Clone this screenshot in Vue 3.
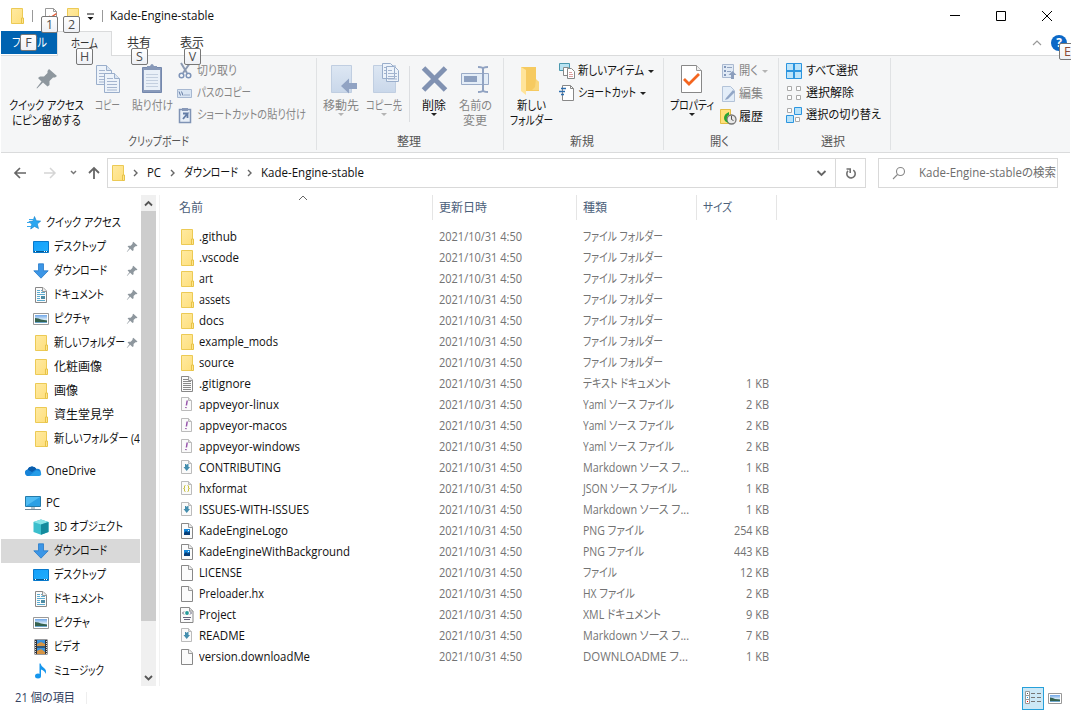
<template>
  <div class="window">
    <svg class="defs" aria-hidden="true">
      <defs>
        <linearGradient id="g-folder" x1="0" y1="0" x2="1" y2="1">
          <stop offset="0" stop-color="#ffeaa2" />
          <stop offset="1" stop-color="#fedf7c" />
        </linearGradient>
        <linearGradient id="g-pale" x1="0" y1="0" x2="0" y2="1">
          <stop offset="0" stop-color="#dde7f3" />
          <stop offset="1" stop-color="#c9d7ea" />
        </linearGradient>
        <linearGradient id="g-blue" x1="0" y1="0" x2="1" y2="1">
          <stop offset="0" stop-color="#14a0fb" />
          <stop offset="1" stop-color="#22aefc" />
        </linearGradient>
        <linearGradient id="g-sky" x1="0" y1="0" x2="0" y2="1">
          <stop offset="0" stop-color="#6fa6e8" />
          <stop offset="0.55" stop-color="#d9ebf8" />
          <stop offset="1" stop-color="#5a9ac4" />
        </linearGradient>
      </defs>
    </svg>

    <header class="titlebar">
      <svg class="i16" viewBox="0 0 16 16" v-html="icons.folder"></svg>
      <i class="vline first"></i>
      <div class="tipped">
        <svg class="i16" viewBox="0 0 16 16" v-html="icons.check"></svg>
        <kbd class="tip">1</kbd>
      </div>
      <div class="tipped second">
        <svg class="i16" viewBox="0 0 16 16" v-html="icons.folder"></svg>
        <kbd class="tip">2</kbd>
      </div>
      <svg class="more" width="9" height="8" viewBox="0 0 9 8"><path d="M1 .5h7v1H1zM1.500 4h6L4.500 7z" fill="#111" /></svg>
      <i class="vline"></i>
      <span class="title" v-fit="104">Kade-Engine-stable</span>
      <div class="controls">
        <svg width="12" height="12" viewBox="0 0 12 12"><path d="M1 5.500h10" /></svg>
        <svg width="12" height="12" viewBox="0 0 12 12"><path d="M1.500 1.500h9v9h-9z" /></svg>
        <svg width="12" height="12" viewBox="0 0 12 12"><path d="M1 1l10 10M11 1L1 11" /></svg>
      </div>
    </header>

    <nav class="tabs">
      <div v-for="t in tabs" :key="t.key" class="tab" :class="t.cls">
        <span v-fit="t.w">{{ t.label }}</span>
        <kbd class="tip">{{ t.key }}</kbd>
      </div>
      <div class="help">
        <svg width="10" height="6" viewBox="0 0 10 6"><path d="M1 5l4-4 4 4" fill="none" stroke="#999" stroke-width="1.200" /></svg>
        <div class="tipped">
          <b class="question">?</b>
          <kbd class="tip">E</kbd>
        </div>
      </div>
    </nav>

    <section class="ribbon">
      <div v-for="g in groups" :key="g.cls" class="group" :class="g.cls">
        <div class="tools">
          <template v-for="(b, i) in g.big" :key="i">
            <i v-if="b.sep" class="tool-sep"></i>
            <div v-else class="big" :class="[b.cls, { off: b.off }]">
              <svg width="36" height="36" viewBox="0 0 36 36" v-html="icons[b.icon]"></svg>
              <span v-for="l in b.lines" :key="l[0]" class="line"><span v-fit="l[1]">{{ l[0] }}</span></span>
              <i v-if="b.drop" class="drop"></i>
            </div>
          </template>
          <div v-if="g.small" class="smalls">
            <div v-for="s in g.small" :key="s.label" class="small" :class="{ off: s.off }">
              <svg class="i16" viewBox="0 0 16 16" v-html="icons[s.icon]"></svg>
              <span v-fit="s.w">{{ s.label }}</span>
              <i v-if="s.drop" class="drop"></i>
            </div>
          </div>
        </div>
        <div class="caption"><span v-fit="g.w">{{ g.caption }}</span></div>
      </div>
    </section>

    <div class="address-row">
      <div class="arrows">
        <svg width="84" height="16" viewBox="0 0 84 16" fill="none">
          <path d="M12 8H1M6 3L1 8l5 5" stroke="#666" stroke-width="1.700" />
          <path d="M30 8h11M36 3l5 5-5 5" stroke="#d5d5d5" stroke-width="1.500" />
          <path d="M57 6l2.500 2.500L62 6" stroke="#777" stroke-width="1.500" />
          <path d="M80 14V3M75 8l5-5 5 5" stroke="#666" stroke-width="1.800" />
        </svg>
      </div>
      <div class="address">
        <svg class="i16" viewBox="0 0 16 16" v-html="icons.folder"></svg>
        <template v-for="c in crumbs" :key="c[0]">
          <svg class="chev" width="5" height="8" viewBox="0 0 5 8"><path d="M1 1l3 3-3 3" fill="none" stroke="#666" stroke-width="1.400" /></svg>
          <span v-fit="c[1]">{{ c[0] }}</span>
        </template>
        <div class="address-end">
          <svg width="11" height="8" viewBox="0 0 11 8"><path d="M1.500 2l4 4 4-4" fill="none" stroke="#666" stroke-width="1.800" /></svg>
        </div>
        <div class="refresh">
          <svg width="12" height="14" viewBox="0 0 12 14" fill="none" stroke="#707070" stroke-width="1.600"><path d="M8.300 4.200A4.200 4.200 0 1 1 3 4.800M1.500 3h3.700v4" /></svg>
        </div>
      </div>
      <div class="search">
        <svg width="14" height="14" viewBox="0 0 14 14" fill="none" stroke="#888" stroke-width="1.100"><circle cx="8.500" cy="5.500" r="4" /><path d="M5.500 8.500L1 13" /></svg>
        <span v-fit="137">Kade-Engine-stableの検索</span>
      </div>
    </div>

    <main class="content">
      <aside class="tree">
        <div v-for="(n, i) in tree" :key="i" class="node" :class="{ root: n.root, gap: n.gap, selected: n.selected }">
          <svg class="i16" viewBox="0 0 16 16" v-html="icons[n.icon]"></svg>
          <span v-fit="n.w">{{ n.label }}</span>
          <svg v-if="n.pin" class="pin" width="12" height="12" viewBox="7 7 23 22" v-html="icons.pin"></svg>
        </div>
      </aside>
      <div class="scroll">
        <svg width="15" height="16" viewBox="0 0 15 16"><path d="M4 10.500l3.500-3.500 3.500 3.500" /></svg>
        <div class="thumb"></div>
        <svg width="15" height="16" viewBox="0 0 15 16"><path d="M4 6l3.500 3.500L11 6" /></svg>
      </div>
      <div class="files">
        <div class="row head">
          <div class="name"><span v-fit="24">名前</span>
            <svg class="sort" width="10" height="6" viewBox="0 0 10 6"><path d="M1 5l4-4 4 4" fill="none" stroke="#666" /></svg>
          </div>
          <div class="date"><span v-fit="48">更新日時</span></div>
          <div class="type"><span v-fit="24">種類</span></div>
          <div class="size"><span v-fit="29">サイズ</span></div>
        </div>
        <div v-for="f in files" :key="f[1]" class="row">
          <div class="name">
            <svg class="i16" viewBox="0 0 16 16" v-html="icons[f[0]]"></svg>
            <span v-fit="f[2]">{{ f[1] }}</span>
          </div>
          <div class="date"><span v-fit="83">2021/10/31 4:50</span></div>
          <div class="type"><span v-fit="typeWidths[f[3]]">{{ f[3] }}</span></div>
          <div class="size"><span v-if="f[4]" v-fit="17 + 6 * String(f[4]).length">{{ f[4] }} KB</span></div>
        </div>
      </div>
    </main>

    <footer class="status">
      <span v-fit="60">21 個の項目</span>
      <i class="vline"></i>
      <div class="views">
        <div class="view active">
          <svg width="18" height="16" viewBox="0 0 18 16">
            <path d="M1.500 1.500h4v4h-4zM1.500 5.500h4v4h-4zM1.500 9.500h4v4h-4z" fill="#fff" stroke="#999" />
            <path d="M7 3.500h4M13 3.500h4M7 7.500h4M13 7.500h4M7 11.500h4M13 11.500h4" stroke="#777" />
            <path d="M3 3h1v1H3z" fill="#555" /><path d="M3 7h1v1H3z" fill="#159be8" /><path d="M3 11h1v1H3z" fill="#e00" />
          </svg>
        </div>
        <svg width="14" height="11" viewBox="0 0 14 11"><path d="M.5.5h13v10H.5z" fill="#fff" stroke="#999" /><path d="M2 2h10v7H2z" fill="url(#g-sky)" /><path d="M2 4.500q3 0 5 1.500l5 .5v1.500H2z" fill="#35624f" /></svg>
      </div>
    </footer>
  </div>
</template>

<script setup>
// narrow UI lettering: squeeze a label to the given width
const vFit = {
  mounted(el, { value }) {
    const natural = el.getBoundingClientRect().width
    if (!natural || !value) return
    el.style.transform = `scaleX(${value / natural})`
    el.style.marginRight = `${value - natural}px`
  }
}

const page = '<path d="M2.500.5h7.500l3.500 3.500v11.500h-11z" fill="#fbfbfb" stroke="#888"/><path d="M9.500.5v4h4" fill="#eee" stroke="#999"/>'
const softPage = '<path d="M2.500.5h7l3 3v10h-10z" fill="#fafafa" stroke="#bbb"/><path d="M9.500.5v3h3" fill="#ddd" stroke="#bbb"/>'
const paleCopy = (x, y) => `<path d="M${x} ${y}h10l5 5v14h-15z" fill="#edf3fa" stroke="#9aaecb"/><path d="M${x + 10} ${y}v5h5" fill="#dbe5f1" stroke="#9aaecb"/><path d="M${x + 2.5} ${y + 5}h6m-6 3h10m-10 3h10m-10 3h10m-10 2.500h10" stroke="#a5b5cf"/>`

const icons = {
  folder: '<path d="M2.500.5h11v15h-11z" fill="url(#g-folder)" stroke="#ecca55"/><path d="M12.500 15.500v-5.500h2v5.500z" fill="#ffe48d" stroke="#e7c347"/>',
  check: '<path d="M2.500.5h8l3 3v12h-11z" fill="#fff" stroke="#999"/><path d="M10.500.5v3h3" fill="none" stroke="#999"/><path d="M6 8l1.500 1.500 6-4" fill="none" stroke="#e45b34" stroke-width="1.500"/>',
  text: page + '<path d="M4 3.500h5m-5 2h8m-8 2h8m-8 2h8m-8 2h8m-8 2h8" stroke="#888"/>',
  blank: page,
  yaml: softPage + '<path d="M8.200 3.500l-.8 5M7 10l-.2 1.200" stroke="#9654aa" stroke-width="1.500"/>',
  md: softPage + '<path d="M6 4h1l.7 1L8.500 4h1v3H11l-3.300 4L4.500 7H6z" fill="#448eae"/>',
  json: softPage + '<path d="M6.500 4.500q-1.500 0-1 1.500t-1 1.500q1.500 0 1 1.500t1 1.500M8.500 4.500q1.500 0 1 1.500t1 1.500q-1.500 0-1 1.500t-1 1.500" fill="none" stroke="#c9c240"/>',
  png: page + '<path d="M5 6h6v6H5z" fill="#1687d9"/><path d="M5 10l2-2 2 1.500 2-1.500v4H5z" fill="#073e77"/><path d="M9 7h1v1H9z" fill="#fff"/>',
  xml: '<path d="M1.500.5h9l3.500 3.500v11.500h-12.500z" fill="#fafafa" stroke="#888"/><path d="M10.500.5v3.500h3.500" fill="#ddd" stroke="#999"/><circle cx="8" cy="6" r="1.900" fill="#269b9b"/><path d="M5 4.500l-1.500 1.500L5 7.500M11 4.500l1.500 1.500L11 7.500M4 10.500h8m-7 2h6" fill="none" stroke="#65637d"/>',
  star: '<path d="M9.500 1.500l1.800 4.200 4.400.4-3.400 2.900 1.200 4.600-4-2.200-3.800 2.600 1-4.700L4 6.500l4-.5z" fill="#2ba7f1" stroke="#1280c7" stroke-width=".6"/><path d="M4 4.500h4M2 7.500h4M2 11.500h4" stroke="#35a7ee"/>',
  desktop: '<path d="M.5 2.500h15v11H.5z" fill="url(#g-blue)" stroke="#0879cb"/><path d="M1 12.500h14" stroke="#07578f"/><path d="M2 12.500h1m8 0h1m1 0h1" stroke="#fff"/>',
  download: '<path d="M5.500.8h5v7h4.700L8 15.200.8 7.800h4.700z" fill="#3c96e6" stroke="#267ac9" stroke-width=".8"/>',
  doc: page + '<path d="M4 3.500h3m1 0h1M4 5.500h3m1 0h4M4 7.500h8m-8 2h3m-3 2h3m-3 2h8" stroke="#5dacd0"/><path d="M8 9h4v3H8z" fill="#4d8ba3"/>',
  picture: '<path d="M.5 2.500h15v11H.5z" fill="#fff" stroke="#999"/><path d="M2 4h12v8H2z" fill="url(#g-sky)"/><path d="M2 7q4 0 6 1.500l6 1V11H2z" fill="#35624f"/>',
  cloud: '<path d="M3.500 13A3.300 3.300 0 0 1 2.500 6.500 5 5 0 0 1 11.500 6a3.500 3.500 0 0 1 1.500 7z" fill="#1683d8"/><path d="M2.500 6.500A5 5 0 0 1 11.500 6L7 9z" fill="#0a5cab"/><path d="M4 13l7-5.500q4-.5 5 2.500t-2.500 3z" fill="#269de8"/>',
  pc: '<path d="M.5 1.500h15v10H.5z" fill="#50bcf3" stroke="#247baa"/><path d="M1 11L15 2v9z" fill="#2ba0e5"/><path d="M6 12h4v2H6z" fill="#b7c5ce"/><path d="M0 14.500h16" stroke="#718999"/>',
  cube: '<path d="M.5 3l7.500-2.500L15.500 3v10L8 15.800.5 13z" fill="#3bbfcd"/><path d="M.5 3l7.500-2.500L15.500 3 8 5.500z" fill="#88e4e8"/><path d="M8 5.500L15.500 3v10L8 15.800z" fill="#148b9d"/>',
  video: '<path d="M1.500.5h13v15h-13z" fill="#303338"/><path d="M4 1h8v14H4z" fill="#3c91d9"/><path d="M4 5l4-2 4 2v2H4zM4 12l4-2 4 3v2H4z" fill="#d69443"/><path d="M2.500 2v13M13.500 2v13" stroke="#ddd" stroke-dasharray="1 1"/><path d="M4 8h8" stroke="#222"/>',
  music: '<ellipse cx="5" cy="13" rx="3" ry="2.500" fill="#1696ed"/><path d="M6.500 13V.5h1q.5 2.500 3.500 4.500t1.500 6Q12 7.500 8 6.500v6.500z" fill="#1696ed"/>',
  pin: '<path d="M21 8l8 7-2 1.500h-2L21.500 20v4l-2 1.500-4.500-4-6 6-.5-.5 5-6.500L10 17l2-1.500h4l3.500-3.500v-2z" fill="#8e979e"/>',
  copy: paleCopy(6.5, 4.5) + paleCopy(14.5, 12.5),
  paste: '<path d="M8.500 6.500h19v25h-19z" fill="#8a9bbb" stroke="#7488ad"/><path d="M10 9h16v20H10z" fill="#e9f0f8"/><path d="M12 13.500h12m-12 3h12m-12 3h12m-12 3h12m-12 3h12" stroke="#c3cfdf"/><path d="M13 5h3q2-4 4 0h3v4H13z" fill="#8798b8"/>',
  moveTo: '<path d="M8.500 4.500h20v27h-20z" fill="url(#g-pale)" stroke="#c0cee1"/><path d="M18 25l8-7.500v4.500h8v6h-8v4.500z" fill="#91a3c3"/>',
  copyTo: '<path d="M7.500 4.500h22v27h-22z" fill="url(#g-pale)" stroke="#c0cee1"/><path d="M16.500 2.500h8l4 4v11h-12zM20.500 5.500h8l4 4v11h-12z" fill="#edf3fa" stroke="#9aaecb"/><path d="M18 6.500h2m-2 3h2m-2 3h2m2-3h4m-4 3h9m-9 3h9m-9 2.500h9" stroke="#a5b5cf"/>',
  remove: '<path d="M7.500 7L29.500 29M29.500 7l-22 22" stroke="#8192b2" stroke-width="5"/>',
  rename: '<path d="M4.500 12.500h27v11h-27z" fill="#e4edf7" stroke="#9aabc7"/><path d="M7 15h13v6H7z" fill="#8da0c0"/><path d="M26 7v23M21 6q5 0 5 2 0-2 5-2M21 31q5 0 5-2 0 2 5 2" fill="none" stroke="#91a3c2" stroke-width="2"/>',
  newFolder: '<path d="M8 6h15v13l3 2v9H8z" fill="#f6ca60"/><path d="M23 18l3 3v8h-7l3-3z" fill="#f9d77d"/><path d="M8 6l5 3v25l-5-4z" fill="#ffe49a"/>',
  props: '<path d="M7.500 4.500h15l5 5v22h-20z" fill="#fff" stroke="#888"/><path d="M22.500 4.500v5h5" fill="#eee" stroke="#999"/><path d="M10 18l5 5L25 13" fill="none" stroke="#f4651f" stroke-width="2.800"/>',
  cut: '<path d="M4 0l6 10M13 0L6 10" stroke="#8c9ab2" stroke-width="2"/><circle cx="4.500" cy="12.500" r="2.300" fill="none" stroke="#7e94b8" stroke-width="1.500"/><circle cx="11.500" cy="12.500" r="2.300" fill="none" stroke="#7e94b8" stroke-width="1.500"/>',
  path: '<path d="M.5 4.500h14v8H.5z" fill="#d9e5f3" stroke="#a7b8d1"/><path d="M2 6.500l1.500 4M4.500 6.500l1.500 4m1.500-.5h1m1 0h1m1 0h1" stroke="#6279a2"/>',
  link: '<path d="M2.500 2.500h11v13h-11z" fill="#e8eff8" stroke="#7f93b5" stroke-width="1.500"/><path d="M5 1h6v3H5z" fill="#8798b8"/><path d="M10.500 6v5M6 6.500h4.500L6 12" fill="none" stroke="#637da7" stroke-width="1.800"/>',
  newItem: '<path d="M.5.5h10v7H.5z" fill="#b8e3f2" stroke="#4b98af"/><path d="M4.500 4.500h5l2 2v6h-7z" fill="#fff" stroke="#888"/><path d="M8.500 5.500h4l3 3v7h-7z" fill="#fff" stroke="#888"/><path d="M10 9.500h3m-3 2h4m-4 2h4" stroke="#dda0a0"/>',
  shortcut: '<path d="M3.500.5h8l3 3v12h-11z" fill="#fff" stroke="#888"/><path d="M11.500.5v3h3" fill="none" stroke="#888"/><path d="M2 3.500h5M0 6.500h6M2 9.500h3" stroke="#2d6eae" stroke-width="1.500"/>',
  open: '<path d="M.5 1.500h11v13H.5z" fill="#e1eaf5" stroke="#aab9d0"/><path d="M2 3h2v2H2zM2 7h2v2H2zM2 11h2v2H2z" fill="#8297ba"/><path d="M5 4.500h5m-5 4h4" stroke="#91a3bf"/><path d="M10.500 8l4 4H12v4H9v-4H6.500z" fill="#8c9ebc"/>',
  edit: '<path d="M.5.5h8l4 4v11H.5z" fill="#e3edf8" stroke="#b3c3d8"/><path d="M4 12l7-8 2 2-7 7-3 1z" fill="#91a6c6"/>',
  history: '<path d="M-1.500.5h10v14h-10z" fill="#ffe079" stroke="#e3bd45"/><circle cx="9.500" cy="10.500" r="4.500" fill="#e8e8e8" stroke="#777" stroke-width="1.300"/><path d="M9.500 7v3.500l2 1" stroke="#555" fill="none"/><path d="M7 3v3Q4 7 5 12l2 2Q2 13 2 9t5-6z" fill="#28a334"/>',
  all: '<path d="M.5.5h15v15H.5z" fill="#bde4fa" stroke="#2c95df"/><path d="M8 1v14M1 8h14" stroke="#2c95df" stroke-width="2"/>',
  none: '<path d="M1.500 1.500h4v4h-4zM10.500 1.500h4v4h-4zM1.500 10.500h4v4h-4zM10.500 10.500h4v4h-4z" fill="#fff" stroke="#aaa"/>',
  invert: '<path d="M1.500 1.500h4v4h-4zM9.500 10.500h4v4h-4z" fill="#fff" stroke="#aaa"/><path d="M8.500.5h7v7h-7zM.5 8.500h7v7h-7z" fill="#b6e2fa" stroke="#2c95df"/>'
}

const tabs = [
  { label: 'ファイル', w: 35, key: 'F', cls: 'file' },
  { label: 'ホーム', w: 27, key: 'H', cls: 'home' },
  { label: '共有', w: 24, key: 'S', cls: 'share' },
  { label: '表示', w: 24, key: 'V', cls: 'show' }
]

const groups = [
  {
    cls: 'clipboard', caption: 'クリップボード', w: 61,
    big: [
      { icon: 'pin', cls: 'w84', lines: [['クイック アクセス', 75], ['にピン留めする', 69]] },
      { icon: 'copy', cls: 'w39', off: true, lines: [['コピー', 25]] },
      { icon: 'paste', cls: 'w50', off: true, lines: [['貼り付け', 41]] }
    ],
    small: [
      { icon: 'cut', label: '切り取り', w: 40, off: true },
      { icon: 'path', label: 'パスのコピー', w: 54, off: true },
      { icon: 'link', label: 'ショートカットの貼り付け', w: 109, off: true }
    ]
  },
  {
    cls: 'organize', caption: '整理', w: 24,
    big: [
      { icon: 'moveTo', cls: 'w42', off: true, drop: true, lines: [['移動先', 36]] },
      { icon: 'copyTo', cls: 'w44', off: true, drop: true, lines: [['コピー先', 36]] },
      { sep: true },
      { icon: 'remove', cls: 'w39', drop: true, lines: [['削除', 24]] },
      { icon: 'rename', cls: 'w44', off: true, lines: [['名前の', 33], ['変更', 24]] }
    ]
  },
  {
    cls: 'create', caption: '新規', w: 24,
    big: [{ icon: 'newFolder', cls: 'w46', lines: [['新しい', 29], ['フォルダー', 43]] }],
    small: [
      { icon: 'newItem', label: '新しいアイテム', w: 66, drop: true },
      { icon: 'shortcut', label: 'ショートカット', w: 58, drop: true }
    ]
  },
  {
    cls: 'opening', caption: '開く', w: 19,
    big: [{ icon: 'props', cls: 'w50', drop: true, lines: [['プロパティ', 44]] }],
    small: [
      { icon: 'open', label: '開く', w: 19, off: true, drop: true },
      { icon: 'edit', label: '編集', w: 24, off: true },
      { icon: 'history', label: '履歴', w: 24 }
    ]
  },
  {
    cls: 'select', caption: '選択', w: 24,
    small: [
      { icon: 'all', label: 'すべて選択', w: 52 },
      { icon: 'none', label: '選択解除', w: 48 },
      { icon: 'invert', label: '選択の切り替え', w: 75 }
    ]
  }
]

const crumbs = [['PC', 14], ['ダウンロード', 54], ['Kade-Engine-stable', 103]]

const tree = [
  { icon: 'star', label: 'クイック アクセス', w: 75, root: true },
  { icon: 'desktop', label: 'デスクトップ', w: 52, pin: true },
  { icon: 'download', label: 'ダウンロード', w: 53, pin: true },
  { icon: 'doc', label: 'ドキュメント', w: 50, pin: true },
  { icon: 'picture', label: 'ピクチャ', w: 36, pin: true },
  { icon: 'folder', label: '新しいフォルダー', w: 71, pin: true },
  { icon: 'folder', label: '化粧画像', w: 48 },
  { icon: 'folder', label: '画像', w: 24 },
  { icon: 'folder', label: '資生堂見学', w: 60 },
  { icon: 'folder', label: '新しいフォルダー (4', w: 86 },
  { icon: 'cloud', label: 'OneDrive', w: 50, root: true, gap: true },
  { icon: 'pc', label: 'PC', w: 14, root: true, gap: true },
  { icon: 'cube', label: '3D オブジェクト', w: 69 },
  { icon: 'download', label: 'ダウンロード', w: 53, selected: true },
  { icon: 'desktop', label: 'デスクトップ', w: 52 },
  { icon: 'doc', label: 'ドキュメント', w: 50 },
  { icon: 'picture', label: 'ピクチャ', w: 36 },
  { icon: 'video', label: 'ビデオ', w: 26 },
  { icon: 'music', label: 'ミュージック', w: 50 }
]

const typeWidths = {
  'ファイル フォルダー': 80,
  'テキスト ドキュメント': 88,
  'Yaml ソース ファイル': 91,
  'Markdown ソース フ...': 106,
  'JSON ソース ファイル': 94,
  'PNG ファイル': 61,
  'ファイル': 34,
  'HX ファイル': 52,
  'XML ドキュメント': 78,
  'DOWNLOADME フ...': 105
}

// icon, name, name width, type, size in KB
const files = [
  ['folder', '.github', 38, 'ファイル フォルダー'],
  ['folder', '.vscode', 40, 'ファイル フォルダー'],
  ['folder', 'art', 14, 'ファイル フォルダー'],
  ['folder', 'assets', 31, 'ファイル フォルダー'],
  ['folder', 'docs', 25, 'ファイル フォルダー'],
  ['folder', 'example_mods', 79, 'ファイル フォルダー'],
  ['folder', 'source', 35, 'ファイル フォルダー'],
  ['text', '.gitignore', 52, 'テキスト ドキュメント', 1],
  ['yaml', 'appveyor-linux', 80, 'Yaml ソース ファイル', 2],
  ['yaml', 'appveyor-macos', 88, 'Yaml ソース ファイル', 2],
  ['yaml', 'appveyor-windows', 101, 'Yaml ソース ファイル', 2],
  ['md', 'CONTRIBUTING', 82, 'Markdown ソース フ...', 1],
  ['json', 'hxformat', 48, 'JSON ソース ファイル', 1],
  ['md', 'ISSUES-WITH-ISSUES', 110, 'Markdown ソース フ...', 1],
  ['png', 'KadeEngineLogo', 89, 'PNG ファイル', 254],
  ['png', 'KadeEngineWithBackground', 151, 'PNG ファイル', 443],
  ['blank', 'LICENSE', 43, 'ファイル', 12],
  ['blank', 'Preloader.hx', 65, 'HX ファイル', 2],
  ['xml', 'Project', 37, 'XML ドキュメント', 9],
  ['md', 'README', 46, 'Markdown ソース フ...', 7],
  ['blank', 'version.downloadMe', 111, 'DOWNLOADME フ...', 1]
]
</script>

<style>
body {
  margin: 0;
  background: #fff;
  overflow: hidden;
}
</style>

<style scoped>
.window {
  width: 1071px;
  height: 710px;
  overflow: hidden;
  display: flex;
  flex-direction: column;
  background: #fff;
  color: #111;
  font: 12px/16px "Open Sans", "Noto Sans CJK JP", sans-serif;
  font-feature-settings: "palt";
}
.window * { box-sizing: border-box; }
svg { display: block; flex: none; overflow: visible; }
span {
  display: inline-block;
  white-space: pre;
  transform-origin: left center;
  flex: none;
}
.defs { position: absolute; width: 0; height: 0; }
.i16 { width: 16px; height: 16px; }
.tipped { position: relative; }
.tip {
  position: absolute;
  width: 17px;
  height: 17px;
  border: 1px solid #777;
  border-radius: 2px;
  background: linear-gradient(#fff, #eef0f5);
  color: #4c4c4c;
  font: 12.5px/15px "Open Sans", sans-serif;
  text-align: center;
  z-index: 2;
}
.vline { width: 1px; height: 12px; background: #999; }

.titlebar {
  height: 31px;
  flex: none;
  display: flex;
  align-items: center;
  padding-left: 9px;
}
.titlebar .first { margin: 0 10px 0 7px; }
.titlebar .second { margin-left: 6px; }
.titlebar .tip { left: -2px; top: 8px; }
.more { margin: 3px 7px 0 5px; }
.title { margin-left: 7px; }
.controls {
  margin-left: auto;
  padding-right: 18px;
  display: flex;
  gap: 34px;
}
.controls path { fill: none; stroke: #000; }

.tabs { height: 24px; flex: none; display: flex; padding-left: 1px; }
.tab {
  position: relative;
  display: flex;
  justify-content: center;
  line-height: 23px;
  color: #333;
}
.file { width: 56px; height: 23px; background: #0063b1; color: #fff; }
.home {
  width: 55px;
  height: 25px;
  background: #f5f6f7;
  border: 1px solid #dadbdc;
  border-bottom: 0;
  z-index: 1;
}
.share { width: 54px; }
.show { width: 52px; }
.file .tip { left: 19px; top: 3px; }
.home .tip { left: 18px; top: 16px; }
.share .tip { left: 19px; top: 17px; }
.show .tip { left: 18px; top: 17px; }
.help { margin-left: auto; display: flex; align-items: center; gap: 9px; padding-right: 4px; }
.question {
  display: block;
  width: 16px;
  height: 16px;
  border-radius: 50%;
  background: #0b68c7;
  color: #fff;
  font-size: 12px;
  line-height: 16px;
  text-align: center;
}
.help .tip { left: 8px; top: 8px; color: #8b4b37; }

.ribbon {
  height: 98px;
  flex: none;
  display: flex;
  margin: 0 1px;
  background: #f5f6f7;
  border: solid #dadbdc;
  border-width: 1px 0;
}
.group {
  margin: 2px 0;
  border-right: 1px solid #e0e2e4;
  display: flex;
  flex-direction: column;
}
.clipboard { width: 316px; padding-left: 3px; }
.organize { width: 187px; padding-left: 3px; }
.create { width: 160px; padding-left: 4px; }
.opening { width: 115px; padding-left: 3px; }
.select { width: 112px; padding-left: 7px; }
.tools { height: 76px; display: flex; }
.caption { display: flex; justify-content: center; color: #555; padding-right: 6px; }
.clipboard .caption { padding-right: 4px; }
.create .caption { padding-right: 8px; }
.select .caption { padding-right: 11px; }
.big {
  display: flex;
  flex-direction: column;
  align-items: center;
  padding-top: 3px;
}
.big svg { margin-bottom: 1px; }
.w84 { width: 84px; }
.w39 { width: 39px; }
.w50 { width: 50px; }
.w42 { width: 42px; }
.w44 { width: 44px; }
.w46 { width: 46px; }
.line { display: flex; line-height: 15px; }
.off { color: #858585; }
.drop {
  border: 3px solid transparent;
  border-top: 3px solid #222;
  border-bottom: 0;
}
.off .drop { border-top-color: #b4b4b4; }
.tool-sep { width: 1px; height: 56px; margin: 8px 4px 0 3px; background: #dcdee1; }
.smalls { display: flex; flex-direction: column; padding-top: 2px; }
.small { height: 22px; display: flex; align-items: center; gap: 3px; }
.small .drop { margin-left: 1px; }
.create .smalls, .opening .smalls { padding-left: 5px; }
.opening .smalls { gap: 1px; }
.opening .small { gap: 1px; }
.opening .small .drop { margin-left: 3px; }
.clipboard .small { gap: 4px; }
.select .small { gap: 4px; }

.address-row { height: 42px; flex: none; display: flex; padding: 5px 0 0 14px; }
.arrows { width: 93px; padding-top: 7px; }
.address {
  width: 759px;
  height: 30px;
  border: 1px solid #d9d9d9;
  display: flex;
  align-items: center;
  padding-left: 2px;
}
.chev { margin: 0 9px 0 7px; }
.chev:not(:nth-child(2)) { margin: 0 9px 0 9px; }
.address-end { margin-left: auto; padding-right: 8px; }
.refresh {
  width: 30px;
  height: 28px;
  border-left: 1px solid #d9d9d9;
  display: flex;
  align-items: center;
  justify-content: center;
}
.search {
  width: 180px;
  height: 30px;
  margin-left: 12px;
  padding-left: 13px;
  border: 1px solid #d9d9d9;
  display: flex;
  align-items: center;
  gap: 13px;
  color: #6d6d6d;
}

.content { height: 491px; flex: none; display: flex; }
.tree { width: 140px; margin-right: 1px; padding: 16px 0 0 1px; overflow: hidden; flex: none; }
.node { position: relative; height: 24px; display: flex; align-items: center; gap: 5px; padding-left: 32px; }
.root { padding-left: 24px; }
.gap { margin-top: 8px; }
.selected { background: #d9d9d9; }
.pin { position: absolute; left: 125px; top: 6px; }
.scroll {
  width: 15px;
  background: #f0f0f0;
  display: flex;
  flex-direction: column;
  flex: none;
}
.scroll path { fill: none; stroke: #555; stroke-width: 1.8; }
.thumb { height: 410px; background: #cdcdcd; }
.scroll svg:last-child { margin-top: auto; }
.files { margin-left: 3px; border-left: 1px solid #f2f2f2; width: 640px; }
.row { height: 21px; display: flex; color: #737373; }
.row > div { display: flex; align-items: center; flex: none; }
.name { width: 273px; padding-left: 19px; gap: 4px; color: #111; }
.date { width: 144px; padding-left: 6px; }
.type { width: 120px; padding-left: 6px; }
.size { width: 80px; padding-right: 8px; justify-content: flex-end; }
.head { height: 25px; margin-bottom: 6px; color: #4c607a; }
.head > div { border-right: 1px solid #e5e5e5; }
.head .name { color: #4c607a; position: relative; }
.head .size { justify-content: flex-start; padding-left: 6px; }
.sort { position: absolute; left: 138px; top: 0; }

.status { height: 24px; flex: none; display: flex; align-items: center; padding-left: 15px; color: #33415f; }
.status .vline { margin-left: 11px; background: #eee; }
.views { margin-left: auto; padding-right: 9px; display: flex; align-items: center; gap: 4px; }
.view { width: 22px; height: 23px; display: flex; align-items: center; justify-content: center; }
.active { background: #cce8f6; border: 1px solid #26a0da; }
</style>
